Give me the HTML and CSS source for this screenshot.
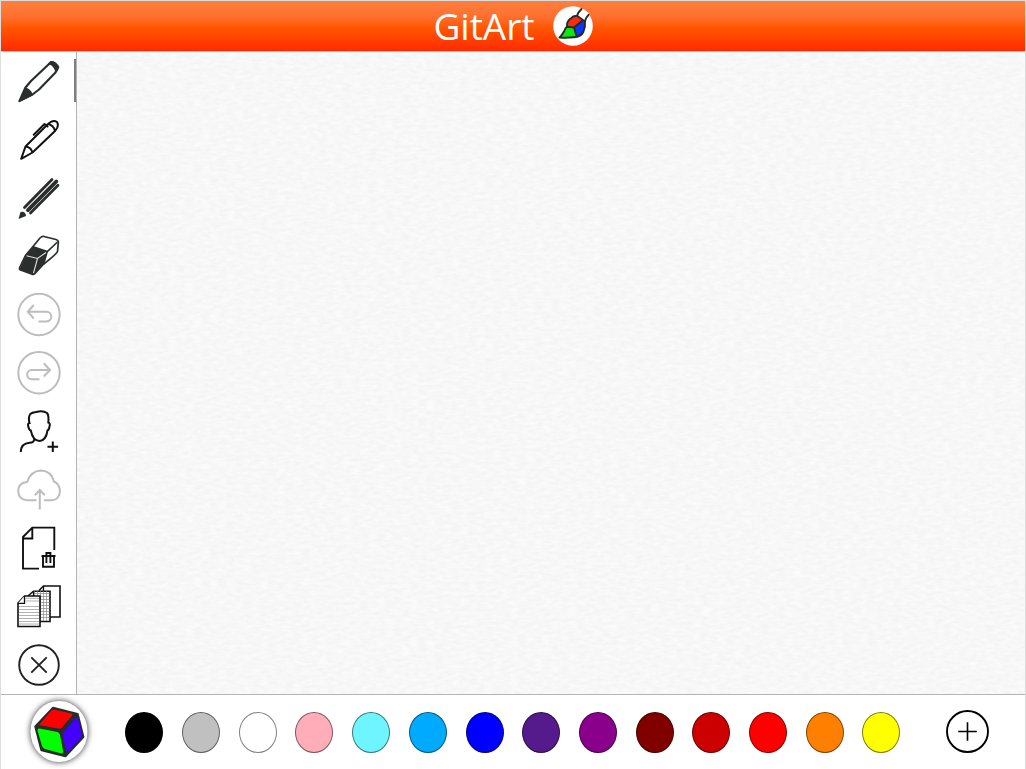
FILE: index.html
```html
<!DOCTYPE html>
<html lang="en">
<head>
<meta charset="utf-8">
<meta name="viewport" content="width=device-width, initial-scale=1">
<title>GitArt</title>
<link rel="stylesheet" href="styles.css">
</head>
<body>
<div class="app">
  <header class="header">
    <h1 class="title">GitArt</h1>
    <svg class="brand" viewBox="0 0 40 40" aria-hidden="true">
      <circle cx="20" cy="20" r="19.8" fill="#fff"/>
      <path d="M24 10 29 2.500 36 7 31.500 15z" fill="#fff"/>
      <path d="M14 21.500Q15 12 23.200 10L29.500 14.500 21 21.500z" fill="#ff2a10"/>
      <path d="M6.500 31.500Q11.500 27 14 21L21 21.500 23.300 31Q15 32 6.500 31.500z" fill="#0be80b"/>
      <path d="M21 21.500 29.500 14.500 32 16.500Q32.500 22 30 27.500 28 31 23.300 30.500z" fill="#0a35ff"/>
      <path d="M6.500 31.500Q9.500 28.500 11 25.500 12.500 22 14 20.500 13.500 16 17.300 12.800 20.500 9.500 24 9.800L32 15.500Q32.500 20.500 30.500 25.500 28 31 21 31.300 13 32 6.500 31.500zM14 20.800 21 21.500 23.300 29.500M21 21.500 29.500 14.500M24 9.800Q24.800 6.500 28.500 3M32 15.500Q32.500 12 35.500 8.800" fill="none" stroke="#222a26" stroke-width="1.900" stroke-linecap="round" stroke-linejoin="round"/>
    </svg>
  </header>

  <nav class="tools" aria-label="Drawing tools">
    <button class="tool" type="button" aria-label="Marker">
      <svg class="icon" viewBox="0 0 44 44"><path d="M8.500 28.500 14 22 31.500 5.500Q34 2 36.500 3.500L40.500 7.500Q41.500 9.500 38 14L22 30.500 15.500 35.500 2.500 42z" fill="#fff" stroke="#2a2f2d" stroke-width="2.200" stroke-linejoin="round"/><path d="M1.500 43.200 8 28.500Q13.500 29 16 36z M31 5 33.500 2Q39 1.500 42.500 8L38.500 14.500Q38 7 31 5z" fill="#2a2f2d"/></svg>
    </button>
    <button class="tool" type="button" aria-label="Pen">
      <svg class="icon" viewBox="0 0 44 44"><path d="M4.200 40.800 8.500 28.500 30.500 6.500Q36 1 40 4 42.500 8.500 38 13L15.500 34.500zM8.500 28.500Q14 29 15.500 34.500M31 6Q36.500 7 38 13M16.800 16.800 27.500 6 30.500 8.500" fill="none" stroke="#111" stroke-width="2" stroke-linejoin="round" stroke-linecap="round"/></svg>
    </button>
    <button class="tool" type="button" aria-label="Pencil">
      <svg class="icon" viewBox="0 0 44 44"><path d="M1.500 43 3.500 36Q8.500 35 9 40z" fill="#2a2f2d"/><path d="M7.500 31.500 35 3.500M13.500 37 41 9.200" stroke="#2a2f2d" stroke-width="2.800" stroke-linecap="round"/><path d="M11 34.200 39.300 5.500" stroke="#2a2f2d" stroke-width="3.900" stroke-linecap="round"/></svg>
    </button>
    <button class="tool" type="button" aria-label="Eraser">
      <svg class="icon" viewBox="0 0 44 44"><path d="M27 2.500 39 5.500Q42 6.500 41.300 9L40.500 17.500Q39.500 20 26 30.700L18 39.500Q16.500 41 14.500 40L3.500 36Q2 35.500 2.700 33.500L8.500 21.500 16 12.500 23 4Q25 2 27 2.500z" fill="#fff" stroke="#2a2f2d" stroke-width="1.700"/><path d="M16 12.700 30.300 17.500 40.500 8 M30 18 26.500 30.500" fill="none" stroke="#2a2f2d" stroke-width="1.700"/><path d="M16 12.700 30.500 17.700 26.500 30.500 17 40.500 2.500 35.500 8.500 21.500z" fill="#2a2f2d"/><path d="M9.500 21.800 20.500 24.500 29 18.500M20.500 24.500 16.500 39" fill="none" stroke="#ddd" stroke-width="1.100"/></svg>
    </button>
    <button class="tool" type="button" aria-label="Undo" disabled>
      <svg class="icon" viewBox="0 0 44 44"><circle cx="22" cy="21.500" r="20.700"/><path d="M16.800 12 10.800 18.800 16.800 25.500M10.800 18.800H29.500A4.800 4.800 0 0 1 29.500 28.400H21.500"/></svg>
    </button>
    <button class="tool" type="button" aria-label="Redo" disabled>
      <svg class="icon" viewBox="0 0 44 44"><circle cx="22" cy="21.700" r="20.700"/><path d="M26.800 12.300 33 19 26.800 25.500M33 19H14.700A4.600 4.600 0 0 0 14.700 28.200H22.500"/></svg>
    </button>
    <button class="tool" type="button" aria-label="Add person">
      <svg class="icon" viewBox="0 0 44 44"><path d="M12.500 14Q11 8 13.300 5 15 3.500 19 3 26 1 30 4 32 6 31.300 13.500 33.500 14 32.500 17.500 32 21 30.500 21.500 29 31.500 22.500 32 16 32 13.800 21.500 12 21 11.300 17.500 10.500 14 12.500 14zM17 30Q17.500 33.500 12.500 33.800 4 34.500 3.800 43" fill="none" stroke="#111" stroke-width="2"/><path d="M35.800 32.500V43M30.500 37.800H41.100" stroke="#111" stroke-width="2"/></svg>
    </button>
    <button class="tool" type="button" aria-label="Upload" disabled>
      <svg class="icon" viewBox="0 0 44 44"><path d="M19.500 32.300H10Q1.200 31.500 1.200 22.800 1.700 14.500 10.200 14 13.500 3 24 2.500 34.500 3 37 13.500 42.500 16 43 22.800 42.500 32 35 32.300H26.800M22.800 41.500V22M17.800 27.200 22.800 22 27.800 27.200"/></svg>
    </button>
    <button class="tool" type="button" aria-label="Delete page">
      <svg class="icon" viewBox="0 0 44 44"><path d="M22 42.600H6V11L15.300 1.600H37.300V24M15.300 1.600V12.500H6" fill="none" stroke="#111" stroke-width="1.900"/><path d="M24.500 30H38.500M26 30V40.700H37V30M29.400 37V27H33.400V37" fill="none" stroke="#111" stroke-width="1.900"/></svg>
    </button>
    <button class="tool" type="button" aria-label="Paper styles">
      <svg class="icon" viewBox="0 0 44 44"><path d="M22 6.500 26.500 2H43V33H31" fill="#fff" stroke="#111" stroke-width="1.600"/><path d="M11.500 11.500 16.500 7.200H33V37.500H21z" fill="#fff" stroke="#111" stroke-width="1.600"/><path d="M17 9.500H32.500M17 12.500H32.500M17 15.500H32.500M17 18.500H32.500M17 21.500H32.500M17 24.500H32.500M17 27.500H32.500M17 30.500H32.500M17 33.500H32.500M17.500 7V12M20.500 7V12M23.500 7V37M26.500 7V37M29.500 7V37" stroke="#888" stroke-width=".7"/><path d="M26.500 2V7M16.500 7.200V12" stroke="#111" stroke-width="1.300"/><path d="M1 42.500V19L7.500 12H23V42.500z" fill="#fff" stroke="#111" stroke-width="1.600"/><path d="M2 22.500H22M2 25.500H22M2 28.500H22M2 31.500H22M2 34.500H22M2 37.500H22M2 40H22M8.500 17H22M8.500 14.300H22" stroke="#aaa" stroke-width=".9"/><path d="M7.500 12V19.300H1" fill="#fff" stroke="#111" stroke-width="1.300"/></svg>
    </button>
    <button class="tool" type="button" aria-label="Close">
      <svg class="icon" viewBox="0 0 44 44"><circle cx="22" cy="22" r="19.800" fill="none" stroke="#222" stroke-width="1.900"/><path d="M14.300 14.300 29.700 29.700M29.700 14.300 14.300 29.700" stroke="#222" stroke-width="1.900"/></svg>
    </button>
  </nav>

  <main class="paper" aria-label="Canvas">
    <svg class="grain" aria-hidden="true">
      <filter id="grain" x="0" y="0" width="100%" height="100%" color-interpolation-filters="sRGB">
        <feTurbulence type="fractalNoise" baseFrequency="0.12 0.3" numOctaves="3" seed="4"/>
        <feColorMatrix values="0.05 0 0 0 0.945  0.05 0 0 0 0.945  0.05 0 0 0 0.945  0 0 0 0 1"/>
      </filter>
      <rect width="100%" height="100%" filter="url(#grain)"/>
    </svg>
  </main>

  <footer class="footer">
    <button class="wheel" type="button" aria-label="Colour cube">
      <svg class="cube" viewBox="0 0 60 62">
        <ellipse cx="30" cy="30.500" rx="28.500" ry="30.500" fill="#fff"/>
        <path d="M24 7 48.500 13.300 54.200 36 36.500 55 12.500 49 6.500 25.500z" fill="#262c29" stroke="#262c29" stroke-width="2.500" stroke-linejoin="round"/>
        <path d="M25 8.500 43 12.800Q44 13.500 43 14.800L32.500 27Q31.500 28 29.500 27.500L11.500 24.300Q9.500 24 11.500 22L22.500 9.500Q24 8.200 25 8.500z" fill="red"/>
        <path d="M10.500 27.500 28.500 31Q30.300 31.500 31 34L34.200 50.500Q34 53 31.500 52.300L16 48Q14 47.500 13 45L8.500 29.500Q8.500 27.200 10.500 27.500z" fill="#0f0"/>
        <path d="M34.500 31 46.500 17.500Q48.300 16 49 18L53 33.500Q53.200 35.500 52 37L39.500 50Q37.500 51.500 37 49L33.500 34Q33.200 32.300 34.500 31z" fill="#4300ff"/>
      </svg>
    </button>
    <div class="swatches" role="group" aria-label="Colours">
      <button class="swatch black" type="button" aria-label="Black"></button>
      <button class="swatch silver" type="button" aria-label="Silver"></button>
      <button class="swatch white" type="button" aria-label="White"></button>
      <button class="swatch pink" type="button" aria-label="Pink"></button>
      <button class="swatch aqua" type="button" aria-label="Aqua"></button>
      <button class="swatch sky" type="button" aria-label="Sky blue"></button>
      <button class="swatch blue" type="button" aria-label="Blue"></button>
      <button class="swatch indigo" type="button" aria-label="Indigo"></button>
      <button class="swatch purple" type="button" aria-label="Purple"></button>
      <button class="swatch maroon" type="button" aria-label="Maroon"></button>
      <button class="swatch crimson" type="button" aria-label="Crimson"></button>
      <button class="swatch red" type="button" aria-label="Red"></button>
      <button class="swatch orange" type="button" aria-label="Orange"></button>
      <button class="swatch yellow" type="button" aria-label="Yellow"></button>
    </div>
    <button class="add" type="button" aria-label="Add colour">
      <svg class="icon" viewBox="0 0 44 44"><circle cx="21.500" cy="21.500" r="20.500" fill="none" stroke="#000" stroke-width="1.900"/><path d="M21.500 12.200V30.800M12.200 21.500H30.800" stroke="#000" stroke-width="1.600"/></svg>
    </button>
  </footer>
</div>
</body>
</html>
```

FILE: styles.css
```css
* {
  box-sizing: border-box;
}

body {
  margin: 0;
  background: #fff;
  font-family: "Open Sans", "Noto Sans", sans-serif;
}

button {
  padding: 0;
  border: 0;
  background: none;
  cursor: pointer;
}

button:disabled {
  cursor: default;
}

.app {
  display: grid;
  grid-template: auto minmax(0, 1fr) auto / 76px minmax(0, 1fr);
  min-height: 100vh;
  border: 1px solid #dcdcdc;
  border-bottom: 0;
}

.header {
  grid-column: 1 / -1;
  display: flex;
  align-items: center;
  justify-content: center;
  gap: 18px;
  height: 51px;
  border-bottom: 1px solid #d0c8c6;
  background: linear-gradient(#ff7e3c 0%, #ff7130 30%, #ff5500 55%, #ff2a00 100%);
}

.title {
  margin: 0;
  color: #fff;
  font-size: 37px;
  font-weight: 400;
  line-height: 50px;
}

.brand {
  width: 40px;
  height: 40px;
}

.tools {
  position: relative;
  display: flex;
  flex-direction: column;
  border-right: 1px solid #b4b4b4;
  background: #fff;
}

.tools::after {
  content: "";
  position: absolute;
  top: 7px;
  right: 0;
  width: 2px;
  height: 43px;
  background: #7f7f7f;
}

.tool {
  flex: 1;
  display: grid;
  place-items: center;
}

.icon {
  display: block;
  width: 44px;
  height: 44px;
}

.tool:disabled .icon {
  fill: none;
  stroke: #bdbdbd;
  stroke-width: 2;
}

.paper {
  position: relative;
  background: #f7f7f7;
}

.grain {
  position: absolute;
  inset: 0;
  width: 100%;
  height: 100%;
}

.footer {
  grid-column: 1 / -1;
  display: grid;
  grid-template-columns: 115px minmax(0, 1fr) 115px;
  align-items: center;
  height: 75px;
  border-top: 1px solid #b4b4b4;
  background: #fff;
}

.wheel,
.add {
  display: grid;
  place-items: center;
}

.cube {
  width: 60px;
  height: 62px;
  overflow: visible;
  filter: drop-shadow(0 0 3px rgba(0, 0, 0, 0.8));
}

.swatches {
  display: flex;
  justify-content: space-around;
}

.swatch {
  width: 38px;
  height: 41px;
  border: 1px solid rgba(0, 0, 0, 0.5);
  border-radius: 50%;
}

.black { background: #000; }
.silver { background: #c0c0c0; }
.white { background: #fff; }
.pink { background: #ffadb9; }
.aqua { background: #6ef5ff; }
.sky { background: #00aaff; }
.blue { background: #0000ff; }
.indigo { background: #551a8b; }
.purple { background: #8b008b; }
.maroon { background: #800000; }
.crimson { background: #cd0000; }
.red { background: #ff0000; }
.orange { background: #ff8000; }
.yellow { background: #ffff00; }
```
